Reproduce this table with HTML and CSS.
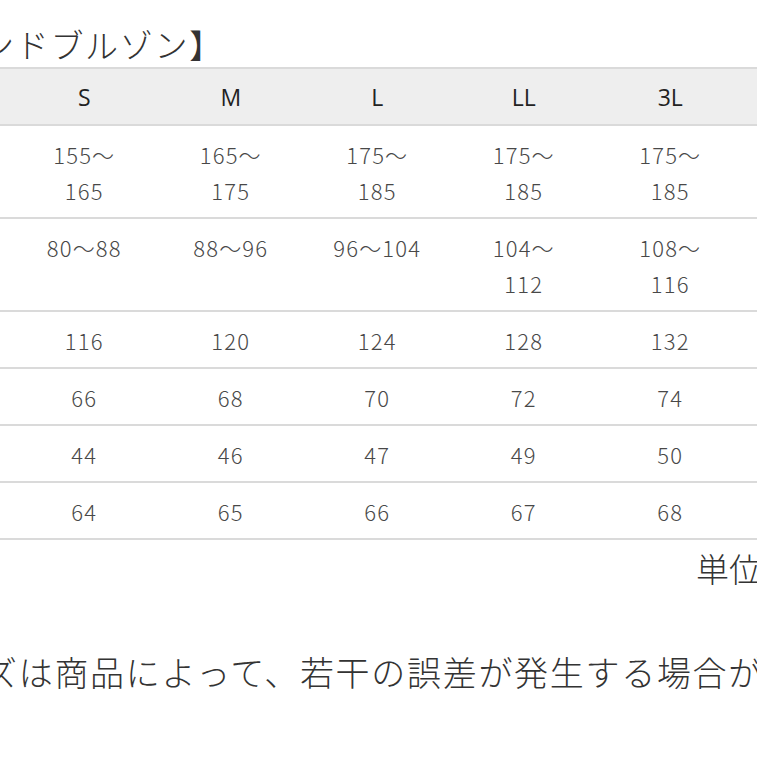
FILE: index.html
```html
<!DOCTYPE html>
<html lang="ja">
<head>
<meta charset="utf-8">
<title>サイズ表</title>
<link rel="stylesheet" href="styles.css">
</head>
<body>
<div class="viewport">
  <h1 class="title">ンドブルゾン】</h1>
  <table class="sizes">
    <colgroup>
      <col class="col-label">
      <col class="col-size"><col class="col-size"><col class="col-size"><col class="col-size"><col class="col-size">
      <col class="col-rest">
    </colgroup>
    <thead>
      <tr><th></th><th>S</th><th>M</th><th>L</th><th>LL</th><th>3L</th><th></th></tr>
    </thead>
    <tbody>
      <tr><td></td><td>155～<br>165</td><td>165～<br>175</td><td>175～<br>185</td><td>175～<br>185</td><td>175～<br>185</td><td></td></tr>
      <tr><td></td><td>80～88</td><td>88～96</td><td>96～104</td><td>104～<br>112</td><td>108～<br>116</td><td></td></tr>
      <tr><td></td><td>116</td><td>120</td><td>124</td><td>128</td><td>132</td><td></td></tr>
      <tr><td></td><td>66</td><td>68</td><td>70</td><td>72</td><td>74</td><td></td></tr>
      <tr><td></td><td>44</td><td>46</td><td>47</td><td>49</td><td>50</td><td></td></tr>
      <tr><td></td><td>64</td><td>65</td><td>66</td><td>67</td><td>68</td><td></td></tr>
    </tbody>
  </table>
  <p class="unit">単位</p>
  <p class="note">ズは商品によって、若干の誤差が発生する場合が</p>
</div>
</body>
</html>
```

FILE: styles.css
```css
html, body {
  margin: 0;
  padding: 0;
  background: #ffffff;
}

body {
  font-family: "Noto Sans CJK JP", "Noto Sans", sans-serif;
  color: #333333;
  overflow: hidden;
}

.viewport {
  width: 757px;
  height: 757px;
  overflow: hidden;
  white-space: nowrap;
}

.title {
  margin: 24px 0 3px -19px;
  font-size: 33px;
  line-height: 40px;
  font-weight: 300;
  letter-spacing: 1.7px;
  color: #333333;
}

.sizes {
  margin-left: -29px;
  border-collapse: collapse;
  table-layout: fixed;
  width: 832px;
}

.col-label { width: 40px; }
.col-size { width: 146.5px; }
.col-rest { width: 60px; }

.sizes th,
.sizes td {
  padding: 10px 0 9px;
  line-height: 36px;
  text-align: center;
  vertical-align: top;
  border-top: 2px solid #dadada;
  border-bottom: 2px solid #dadada;
}

.sizes th {
  background: #eeeeee;
  font-family: "Open Sans", "Noto Sans", sans-serif;
  font-size: 23px;
  font-weight: 400;
  color: #222222;
}

.sizes td {
  font-size: 22px;
  font-weight: 300;
  letter-spacing: 1.2px;
  color: #484848;
}

.unit {
  margin: 8px 0 0 696px;
  font-size: 33px;
  line-height: 40px;
  font-weight: 300;
  color: #333333;
}

.note {
  margin: 64px 0 0 -17px;
  font-size: 34px;
  line-height: 40px;
  font-weight: 300;
  letter-spacing: 1.7px;
  color: #333333;
}
```
